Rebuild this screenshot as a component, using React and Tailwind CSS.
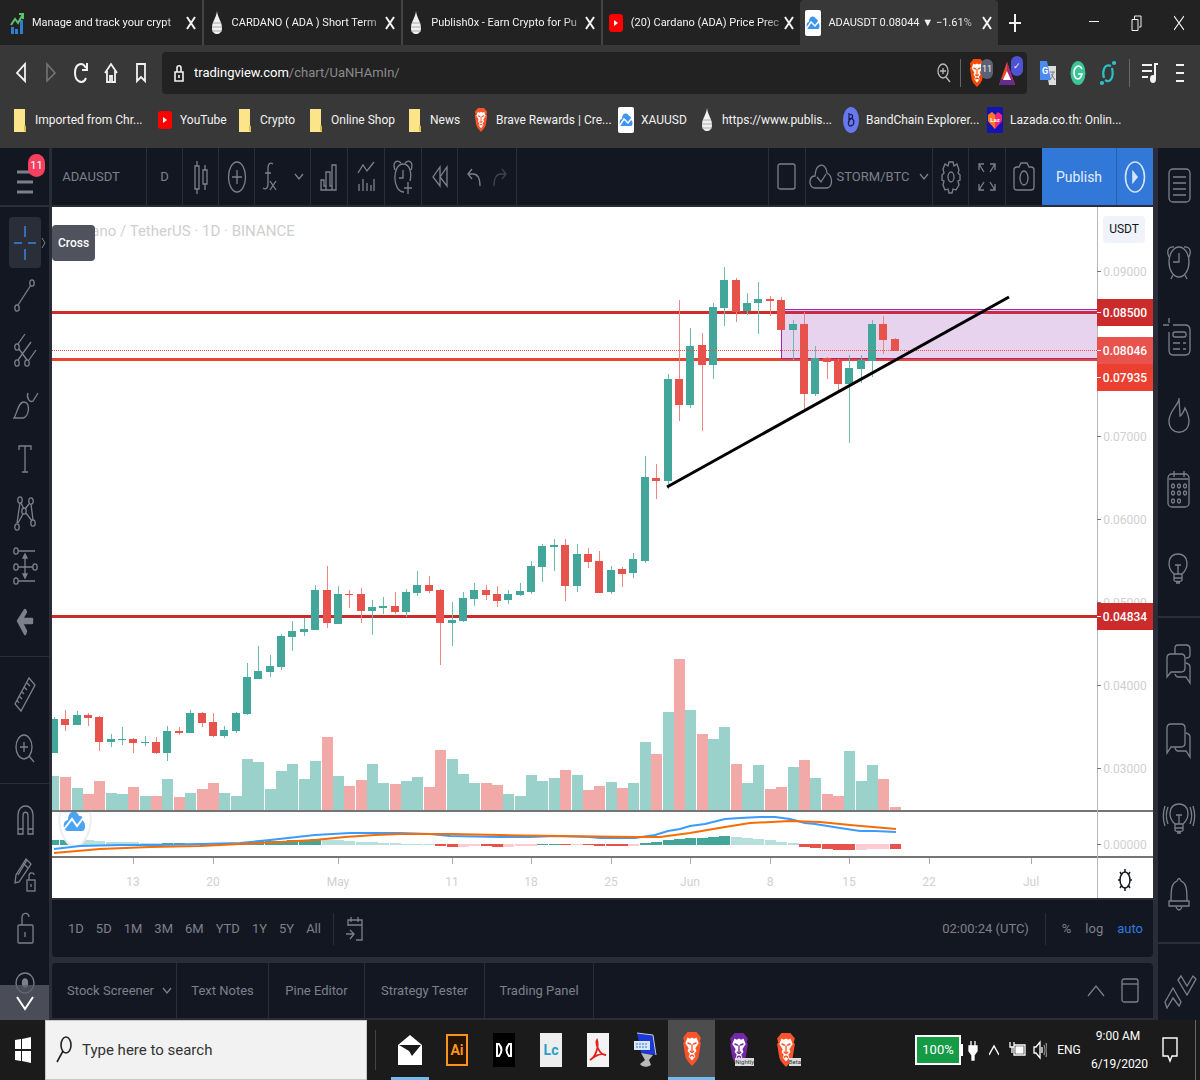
import React from "react";

/* ---------- market data: one row per day, pixel space of the plot ---------- */
/* [up, bodyTop, bodyBottom, wickTop, wickBottom, volumeTop] */
const DAYS = [
  [1, 719, 753, 717, 753, 776], [0, 719, 725, 710, 731, 777], [1, 715, 725, 711, 725, 788],
  [0, 715, 718, 713, 726, 794], [0, 717, 742, 716, 751, 781], [1, 739, 742, 734, 747, 793],
  [1, 739, 740, 727, 745, 794], [0, 739, 743, 738, 753, 787], [1, 742, 743, 736, 746, 796],
  [0, 742, 753, 737, 754, 796], [1, 731, 753, 726, 761, 779], [0, 731, 733, 727, 735, 797],
  [1, 713, 733, 710, 733, 793], [0, 713, 723, 712, 727, 789], [0, 722, 736, 713, 737, 783],
  [1, 730, 736, 726, 738, 793], [1, 713, 731, 712, 733, 796], [1, 677, 714, 663, 715, 759],
  [1, 671, 679, 646, 679, 762], [1, 666, 672, 655, 677, 789], [1, 636, 667, 634, 670, 771],
  [1, 631, 637, 621, 651, 764], [1, 629, 632, 618, 636, 779], [1, 590, 630, 585, 630, 761],
  [0, 590, 623, 566, 628, 737], [1, 594, 624, 586, 624, 776], [0, 594, 595, 590, 608, 786],
  [0, 594, 611, 588, 623, 780], [1, 607, 611, 600, 635, 764], [1, 606, 608, 597, 614, 783],
  [0, 606, 612, 592, 614, 784], [1, 592, 612, 589, 617, 781], [1, 585, 593, 571, 596, 777],
  [0, 585, 591, 576, 593, 787], [0, 590, 623, 589, 665, 750], [1, 620, 623, 602, 646, 759],
  [1, 598, 621, 592, 622, 774], [1, 590, 599, 583, 606, 783], [0, 590, 595, 585, 600, 783],
  [0, 594, 601, 586, 607, 785], [1, 594, 600, 590, 604, 794], [1, 591, 595, 583, 596, 796],
  [1, 566, 592, 561, 594, 775], [1, 546, 567, 544, 582, 781], [1, 545, 547, 539, 571, 778],
  [0, 545, 586, 539, 601, 770], [1, 554, 586, 544, 592, 775], [0, 554, 562, 548, 568, 790],
  [0, 561, 593, 551, 593, 786], [1, 570, 592, 566, 594, 782], [0, 569, 574, 567, 587, 788],
  [1, 559, 573, 553, 578, 783], [1, 477, 561, 456, 563, 742], [0, 478, 481, 464, 499, 754],
  [1, 379, 481, 374, 489, 712], [0, 379, 405, 300, 421, 659], [1, 346, 405, 328, 408, 710],
  [0, 345, 365, 333, 431, 734], [1, 307, 365, 303, 379, 739], [1, 280, 308, 267, 326, 727],
  [0, 280, 312, 278, 322, 764], [1, 303, 311, 293, 315, 783], [1, 299, 303, 282, 334, 765],
  [0, 299, 301, 296, 316, 789], [0, 300, 330, 297, 330, 787], [1, 324, 330, 320, 360, 767],
  [0, 324, 394, 312, 412, 760], [1, 358, 394, 346, 396, 778], [0, 358, 362, 357, 379, 794],
  [0, 361, 384, 359, 391, 796], [1, 368, 384, 355, 443, 751], [1, 360, 369, 355, 383, 781],
  [1, 324, 361, 320, 377, 765], [0, 324, 340, 316, 354, 779], [0, 339, 351, 338, 351, 807],
];
const G = "#42a79a", g = "#b7e0dc", R = "#e8524d", p = "#fdcbd1";
/* [colour, height]; negative heights hang below the zero line */
const HIST = [
  [G, 5], [G, 5], [g, 5], [g, 5], [g, 4], [g, 3], [g, 3], [g, 3], [g, 2], [g, 2], [G, 2], [G, 2], [g, 2],
  [G, 2], [g, 2], [g, 1], [G, 2], [G, 3], [G, 4], [G, 4], [G, 4], [G, 5], [G, 5], [G, 6], [g, 5], [g, 5],
  [g, 4], [g, 3], [g, 3], [g, 2], [g, 2], [g, 1], [g, 1], [g, 1], [R, -2], [R, -3], [p, -3], [p, -2],
  [R, -2], [R, -3], [p, -3], [p, -2], [p, -2], [G, 1], [G, 1], [R, -1], [p, -1], [R, -1], [R, -2],
  [R, -2], [R, -2], [p, -2], [G, 2], [G, 3], [G, 5], [G, 6], [G, 7], [G, 7], [G, 8], [G, 9], [g, 8],
  [g, 7], [g, 6], [g, 5], [g, 3], [g, 2], [R, -3], [R, -4], [R, -5], [R, -6], [R, -6], [p, -6],
  [p, -5], [p, -5], [R, -5],
];
const dayX = (i) => Math.round(53.8 + i * 11.365);

const MACD =
  "54,849 80,846 120,845 160,845 200,844 240,843 270,840 315,835 350,833 400,833 430,834 450,836 500,837 530,837 555,836 590,837 600,838 635,838 655,835 668,831 680,829 690,826 705,824 725,819 740,818 760,817 775,817 790,819 805,823 815,824 840,828 860,831 875,831 896,832";
const SIGNAL =
  "54,853 100,849 150,847 200,846 240,844 280,842 315,840 345,837 375,835 400,834 450,834 500,835 560,836 635,837 660,837 690,833 725,827 750,823 790,821 820,822 850,825 896,829";

const PRICES = [["0.09000", 271], ["0.07000", 436], ["0.06000", 519], ["0.05000", 602], ["0.04000", 685], ["0.03000", 768], ["0.00000", 844]];
const TAGS = [["0.08500", 312, "#cb2b2b"], ["0.08046", 350, "#e8534e"], ["0.07935", 377, "#eb402f"], ["0.04834", 616, "#cb2b2b"]];
const DATES = [["13", 133], ["20", 213], ["May", 338], ["11", 452], ["18", 531], ["25", 611], ["Jun", 690], ["8", 770], ["15", 849], ["22", 929], ["Jul", 1031]];

function Chart() {
  return (
    <svg viewBox="52 207 1101 691" className="block h-auto w-full" role="img" aria-label="ADAUSDT daily chart">
      <rect x="52" y="207" width="1101" height="691" fill="#fff" />
      <g shapeRendering="crispEdges">
        {DAYS.map((d, i) => (
          <rect key={i} x={Math.max(52, dayX(i) - 5)} y={d[5]} width={i ? 11 : 7} height={810 - d[5]} fill={d[0] ? "#9ad2cb" : "#f1aaa7"} />
        ))}
        <rect x="781" y="310" width="316" height="49" fill="#e8d3ee" />
        <path d="M1097 309.5H781.5V359" stroke="#9c27b0" fill="none" />
        <rect x="52" y="311" width="1045" height="3" fill="#cf2c2c" />
        <rect x="781" y="311" width="316" height="3" fill="#c62b48" />
        <rect x="52" y="358" width="1045" height="3" fill="#ec432f" />
        <path d="M781 358.5h316" stroke="#a2268c" />
        <rect x="52" y="615" width="1045" height="3" fill="#cb2b2b" />
        {DAYS.map((d, i) => {
          const x = dayX(i);
          const left = Math.max(52, x - 4);
          return (
            <g key={i}>
              <rect x={x} y={d[3]} width="1" height={d[4] - d[3]} fill={d[0] ? "#6bbbb1" : "#ee8581"} />
              <rect x={left} y={d[1]} width={x + 4 - left} height={d[2] - d[1]} fill={d[0] ? G : R} />
            </g>
          );
        })}
        <path d="M52 350.5h1045" stroke="#e8524d" strokeDasharray="1 1" />
      </g>
      <path d="M667 487 1009 297" stroke="#000" strokeWidth="3" />
      <g shapeRendering="crispEdges">
        {HIST.map(([c, h], i) => {
          const left = Math.max(52, dayX(i) - 5);
          return <rect key={i} x={left} y={h > 0 ? 845 - h : 844} width={i ? 11 : 7} height={Math.abs(h)} fill={c} />;
        })}
      </g>
      <path d="M60 812c-3 14 4 34 15 34s18-20 15-34z" fill="#fff" stroke="#eee" strokeWidth="2" />
      <g transform="translate(64 812)">
        <path d="M3 19C-2 17-1 8 4 8 4-2 13-3 15 4c4 0 4 2 4 5 3 2 3 10-1 10z" fill="#4ba3f5" />
        <path d="m0 17 8-10 5 7 7-9" stroke="#fff" strokeWidth="2" fill="none" />
      </g>
      <polyline points={MACD} fill="none" stroke="#3c9bff" strokeWidth="2" />
      <polyline points={SIGNAL} fill="none" stroke="#f56d05" strokeWidth="2" />
      <g shapeRendering="crispEdges">
        <rect x="52" y="810" width="1101" height="2" fill="#757575" />
        <rect x="52" y="856" width="1101" height="2" fill="#757575" />
        <rect x="1097" y="207" width="1" height="691" fill="#b8b8b8" />
        {PRICES.map(([t, y]) => <rect key={t} x="1097" y={y} width="4" height="1" fill="#777" />)}
        {DATES.map(([t, x]) => <rect key={t} x={x} y="858" width="1" height="6" fill="#aaa" />)}
      </g>
      <g fill="#d0d0d0" className="text-[12px]">
        {PRICES.map(([t, y]) => <text key={t} x="1125" y={y + 5} textAnchor="middle">{t}</text>)}
        {DATES.map(([t, x]) => <text key={t} x={x} y="886" textAnchor="middle">{t}</text>)}
      </g>
      {TAGS.map(([t, y, c]) => (
        <g key={t}>
          <rect x="1097" y={y - 13} width="56" height="27" fill={c} />
          <rect x="1097" y={y} width="4" height="1" fill="#fff" />
          <text x="1125" y={y + 5} textAnchor="middle" fill="#fff" className="text-[12px] font-medium">{t}</text>
        </g>
      ))}
    </svg>
  );
}

/* ---------- line icons ---------- */
const Ico = ({ w = 28, h = 40, c = "", sw = 1.3, children }) => (
  <svg width={w} height={h} viewBox={`0 0 ${w} ${h}`} fill="none" stroke="currentColor" strokeWidth={sw} className={"shrink-0 " + c} aria-hidden="true">
    {children}
  </svg>
);
const E = ({ x, y, rx = 2.2, ry = 3.2, ...r }) => <ellipse cx={x} cy={y} rx={rx} ry={ry} {...r} />;
const Chevron = ({ c }) => <Ico w={10} h={8} c={c}><path d="m1 1 4 5 4-5" /></Ico>;

const LEFT = [
  ["Trend line", <><path d="m7 28 13-20" /><E x={6} y={31} /><E x={21} y={6} /></>],
  ["Pitchfork", <><path d="m7 13 7-10M7 29 20 11M18 29l7-10M8 18l8 11" /><E x={6} y={16} /><E x={6} y={32} /><E x={16} y={32} /></>],
  ["Brush", <><path d="M3 33c3-4 4-16 10-16 7 0 5 15-1 16zM17 8c-2 5 2 10 5 8l5-8" /></>],
  ["Text", <path d="M8 11V7h12v4M14 7v26M11 33h6" />],
  ["Patterns", <><path d="M6 30 9 10M10 10l3 6M7 30l5-9M14 16l4-5M20 11l2 16M15 20l6 8" /><E x={9} y={7} /><E x={20} y={8} /><E x={13} y={18} /><E x={22} y={30} /><E x={6} y={34} /></>],
  ["Prediction", <><path d="M6 4h18M6 20h17M6 34h18M14 9v20" /><path d="m12 11 2-4 2 4zM12 27l2 4 2-4z" fill="currentColor" /><E x={5} y={4} fill="#131722" /><E x={5} y={20} fill="#131722" /><E x={24} y={20} fill="#131722" /><E x={5} y={34} fill="#131722" /></>],
  ["Icons", <path d="m14 9 1 2-4 7h10v4H11l4 8-1 3L7 20z" fill="currentColor" strokeWidth="2.4" strokeLinejoin="round" />],
  null,
  ["Measure", <path d="m18 4 6 7L10 37l-6-7zM16 9l3 3M13 13l3 3M11 18l2 2M8 22l3 3M6 26l2 3" />],
  ["Zoom in", <><ellipse cx="13" cy="19" rx="8" ry="12" /><path d="M13 14v10M9 19h8M18 28l5 6" /></>],
  null,
  ["Magnet", <path d="M7 33V14c0-12 15-12 15 0v19h-5V15c0-5-5-5-5 0v18zM7 28h5M17 28h5" />],
  ["Lock drawing", <><path d="m15 4 5 5L8 27l-4 1 1-8zM12 8l5 5M7 20l9-15" /><rect x="16" y="25" width="8" height="11" /><path d="M18 25v-4c0-4 5-4 5-1M20 29v3" /></>],
  ["Lock", <><rect x="7" y="16" width="15" height="18" rx="1" /><path d="M11 16V9c0-6 7-6 7-1M14 23v5" /></>],
  ["Hide", <><ellipse cx="14" cy="20" rx="9" ry="10" /><ellipse cx="14" cy="20" rx="2.500" ry="4" fill="currentColor" /></>],
];
const bulb = <><path d="M16 26c-8-7-6-20 4-20s12 13 4 20zM16 26v6c0 2 8 2 8 0v-6M16 30h8M18 35h4M20 26v-9M17 17h6" /></>;
const alarm = <><ellipse cx="20" cy="21" rx="10" ry="15" /><path d="M20 12v9h-6M10 16c-3-7 0-11 5-10M30 16c3-7 0-11-5-10M12 38l2-4M28 38l-2-4" /></>;
const RIGHT = [
  ["Watchlist", <><rect x="10" y="4" width="21" height="33" rx="4" /><path d="M14 12h13M14 18h13M14 24h13M14 30h13" /></>],
  ["Alerts", alarm],
  ["Data window", <><path d="M14 8h12q5 0 5 5v20q0 5-5 5H14q-4 0-4-5V15M4 8h6M10 1v5" /><rect x="14" y="15" width="13" height="5" rx="2" /><path d="M14 26h7M24 26h3M14 32h7M24 32h3" /></>],
  ["Hotlists", <path d="M20 5c1 6-10 12-10 23 0 15 20 15 20 0 0-5-2-9-4-13-1 3-2 6-5 8 0-7-1-12-1-18z" />],
  ["Calendar", <><rect x="9" y="5" width="21" height="33" rx="4" /><path d="M15 2v6M25 2v6M10 10h19" />{[14, 20, 26].map((x) => [17, 24, 32].map((y) => x + y < 58 && <E key={x + "-" + y} x={x} y={y} rx={1.5} ry={2} />))}</>],
  ["Ideas", <g transform="translate(-1 3)">{bulb}</g>],
  null,
  ["Public chats", <><path d="M16 11V5q0-3 3-3h8q4 0 4 4v6q0 3-4 3" /><path d="M8 34V15q0-4 4-4h10q4 0 4 4v10q0 4-4 4H12zM27 20q4 1 4 4v16l-4-6h-8q-2 0-3-3" /></>],
  ["Private chats", <path d="M8 34V9q0-4 4-4h10q4 0 4 4v15q0 4-4 4H12zM27 14q4 1 4 4v20l-4-6h-8q-2 0-3-3" />],
  ["Ideas stream", <g transform="translate(0 3)">{bulb}<path d="M9 9c-2 5-2 12 0 17M6 8c-2 6-2 14 0 20M31 9c2 5 2 12 0 17M34 8c2 6 2 14 0 20" /></g>],
  ["Notifications", <path d="M10 30h20v5H10zM12 30c0-14 1-18 6-20q2-5 4 0c5 2 6 6 6 20M17 36q3 6 6 0" />],
  null,
  ["Orders", <path d="m6 33 8-14 8 14-2 4-6-8-6 10zM19 11l3-4 6 10 6-10 3 3-9 16z" />],
];

const B = ({ label, className = "", children, ...r }) => (
  <button type="button" aria-label={label} className={"flex shrink-0 items-center justify-center " + className} {...r}>{children}</button>
);

/* ---------- coloured marks ---------- */
const Lion = ({ w = 18, h = 25, a = "#fb542b" }) => (
  <svg width={w} height={h} viewBox="0 0 18 25" preserveAspectRatio="none" aria-hidden="true">
    <path d="M5 0h8l2 2 2 2-1 3 1 1-2 10q-1 3-6 7-5-4-6-7L1 8l1-1-1-3 2-2z" fill={a} />
    <path d="m5 4 2 1 2-1 2 1 2-1 2 4-3 4 1 2-2 2 1 2-3 3-3-3 1-2-2-2 1-2-3-4z" fill="#fff" />
    <path d="m5 8 3 1M13 8l-3 1M9 9v5M7 14l2 1 2-1M7 18l2-1 2 1" stroke={a} strokeWidth="1.2" fill="none" />
  </svg>
);
const Drop = () => (
  <svg width="12" height="26" viewBox="0 0 12 26" aria-hidden="true">
    <path d="M6 1c1 8 5 10 5 17 0 8-10 8-10 0C1 11 5 9 6 1z" fill="#f1f1f1" />
    <path d="M2 13h8M1 17h10M1 21h10" stroke="#aaa" />
  </svg>
);
const Tv = () => (
  <svg width="16" height="26" viewBox="0 0 16 26" aria-hidden="true">
    <rect width="16" height="26" rx="2" fill="#fff" />
    <path d="M3 19c-2-1-2-7 1-7C4 6 9 5 11 9c2 0 2 2 2 4 2 1 2 6 0 6z" fill="#3c94f3" />
    <path d="m2 18 4-6 4 4 4-5" stroke="#fff" strokeWidth="1.5" fill="none" />
  </svg>
);
const Yt = () => (
  <svg width="14" height="18" viewBox="0 0 14 18" aria-hidden="true"><rect width="14" height="18" rx="3" fill="#f00" /><path d="m5 6 4 3-4 3z" fill="#fff" /></svg>
);
const Folder = () => (
  <svg width="14" height="24" viewBox="0 0 14 24" aria-hidden="true"><path d="M1 1h11v16l1 2v5H1z" fill="#fce48a" /><path d="M11 17v6l2 1v-5z" fill="#e5b93c" /></svg>
);
const Growth = () => (
  <svg width="14" height="22" viewBox="0 0 14 22" aria-hidden="true">
    <path d="M1 22v-7h3v7zM5 22v-5h3v5zM10 22V8h3v14z" fill="#2d7dd2" />
    <path d="m1 13 4-6 3 4 5-9M9 2h4v5" stroke="#5cc46a" strokeWidth="2" fill="none" />
  </svg>
);
const Band = () => (
  <svg width="16" height="26" viewBox="0 0 16 26" aria-hidden="true"><ellipse cx="8" cy="13" rx="8" ry="13" fill="#6879ef" /><path d="M6 6v9M6 12c5-3 7 6 2 7-4 0-3-6 0-7 3-2 1-6-1-4" stroke="#1d1f4f" strokeWidth="1.3" fill="none" /></svg>
);
const Lazada = () => (
  <svg width="16" height="26" viewBox="0 0 16 26" aria-hidden="true">
    <rect width="16" height="26" fill="#1414b4" />
    <path d="m8 22-7-8V8l4-3 3 3 3-3 4 3v6z" fill="#f5277c" /><path d="m8 22-7-8V8l4-3 3 3z" fill="#ff7a1a" />
    <text x="8" y="15" fontSize="6" fontWeight="bold" fill="#fff" textAnchor="middle">Laz</text>
  </svg>
);

const TABS = [
  [<Growth />, "Manage and track your crypt"],
  [<Drop />, "CARDANO ( ADA ) Short Term"],
  [<Drop />, "Publish0x - Earn Crypto for Pu"],
  [<Yt />, "(20) Cardano (ADA) Price Prec"],
  [<Tv />, "ADAUSDT 0.08044 ▼ −1.61%"],
];
const MARKS = [
  [<Folder />, "Imported from Chr..."], [<Yt />, "YouTube"], [<Folder />, "Crypto"], [<Folder />, "Online Shop"], [<Folder />, "News"],
  [<Lion w={14} h={24} />, "Brave Rewards | Cre..."], [<Tv />, "XAUUSD"], [<Drop />, "https://www.publis..."], [<Band />, "BandChain Explorer..."], [<Lazada />, "Lazada.co.th: Onlin..."],
];

function Browser() {
  return (
    <header className="bg-[#383838] text-[#f2f2f2]">
      <div className="flex h-[45px] bg-[#222]">
        <div className="flex min-w-0 flex-1 pl-1" role="tablist">
          {TABS.map(([icon, t], i) => (
            <div key={t} className={"flex min-w-0 flex-1 items-center pr-1.5 pl-1 " + (i === 4 ? "rounded-t bg-[#383838]" : i === 3 ? "" : "border-r-2 border-[#444]")}>
              <button type="button" role="tab" aria-selected={i === 4} className="flex min-w-0 flex-1 items-center gap-1.5">
                <span className="flex w-[18px] shrink-0 justify-center">{icon}</span>
                <span className="flex-1 overflow-hidden text-left text-[11px] leading-6 whitespace-nowrap [mask-image:linear-gradient(to_right,black_88%,#0006)]">{t}</span>
              </button>
              <B label="Close tab" className="ml-1"><Ico w={10} h={14} sw={2}><path d="m1 1 8 12M9 1 1 13" /></Ico></B>
            </div>
          ))}
        </div>
        <B label="New tab" className="w-[34px]"><Ico w={12} h={18} sw={2}><path d="M6 0v18M0 9h12" /></Ico></B>
        <div className="ml-10 flex">
          <B label="Minimize" className="w-[43px]"><Ico w={10} h={14} sw={1}><path d="M0 5.500h10" /></Ico></B>
          <B label="Restore" className="w-[43px]"><Ico w={11} h={16} sw={1}><path d="M1 4.500h6v11H1zM3.500 4V1H10v11H8" /></Ico></B>
          <B label="Close" className="w-[42px]"><Ico w={10} h={16} sw={1.2}><path d="m0 1 10 14M10 1 0 15" /></Ico></B>
        </div>
      </div>
      <div className="flex h-[55px] items-center">
        <div className="flex pl-1.5">
          <B label="Back" className="w-[30px]"><Ico w={12} h={22} sw={1.8}><path d="M10 2v17L2 11z" /></Ico></B>
          <B label="Forward" className="w-[30px] text-[#777]"><Ico w={12} h={22} sw={1.5}><path d="M2 2v17l8-8z" /></Ico></B>
          <B label="Reload" className="w-[30px]"><Ico w={14} h={22} sw={2}><path d="M12 6C8-1 1 2 1 11s8 12 11 5M13 1v7H8" /></Ico></B>
          <B label="Home" className="w-[30px]"><Ico w={14} h={22} sw={1.8}><path d="m1 11 6-9 6 9M3 9v11h3v-6h2v6h3V9" /></Ico></B>
          <B label="Bookmark" className="w-[30px]"><Ico w={12} h={22} sw={1.8}><path d="M2 2h8v17l-4-4-4 4z" /></Ico></B>
        </div>
        <div className="ml-1.5 flex h-[42px] min-w-0 flex-1 items-center rounded bg-[#222] pl-3">
          <Ico w={10} h={18} sw={1.6}><path d="M1 8h8v9H1zM3 8V4c0-3 4-3 4 0v4M5 11v3" /></Ico>
          <a href="#chart" className="ml-2.5 flex-1 truncate text-[13px] text-[#8b8b8b]"><span className="text-white">tradingview.com</span>/chart/UaNHAmIn/</a>
          <B label="Zoom" className="w-7 text-[#bbb]"><Ico w={14} h={24}><ellipse cx="6" cy="10" rx="5" ry="7" /><path d="M6 7v6M3 10h6M9 16l4 5" /></Ico></B>
          <span className="mr-2 ml-0.5 h-7 w-px bg-[#666]" />
          <B label="Brave Shields" className="relative w-6 justify-start"><Lion w={16} h={28} a="#fb4a00" /><span className="absolute top-0 left-3 w-3 rounded-full bg-[#5d6176] text-center text-[9px] leading-5">11</span></B>
          <B label="Rewards" className="relative ml-1.5 w-7 justify-start">
            <svg width="16" height="26" viewBox="0 0 16 26"><path d="M8 2 0 25h16z" fill="#fb4a1c" /><path d="m8 2 8 23H8z" fill="#a3278f" /><path d="M0 25h16l-3-6H2z" fill="#662d91" /><path d="m8 11-4 9h8z" fill="#fff" /></svg>
            <span className="absolute -top-1 left-3 w-3 rounded-full bg-[#4c54d2] text-center text-[9px] leading-5">✓</span>
          </B>
        </div>
        <div className="flex items-center">
          <B label="Translate" className="ml-1.5 w-[30px]"><svg width="16" height="26" viewBox="0 0 16 26"><path d="M6 6h10v19H9z" fill="#ddd" /><path d="M0 1h7l4 19H0z" fill="#4b8bf4" /><text x="5" y="14" fontSize="9" fontWeight="bold" fill="#fff" textAnchor="middle">G</text><path d="M10 12h5M13 12c0 5-2 7-4 8M11 14l4 6" stroke="#778" fill="none" /></svg></B>
          <B label="Grammarly" className="w-[30px]"><svg width="16" height="26" viewBox="0 0 16 26"><ellipse cx="8" cy="13" rx="7.500" ry="12" fill="#3bc495" /><path d="M12 9c-3-6-8-2-8 4s6 9 8 1H8" stroke="#fff" strokeWidth="1.600" fill="none" /></svg></B>
          <B label="ICONex" className="w-[30px] text-[#2cc0c6]"><Ico w={16} h={26} sw={2.2}><path d="M11 6C4 3 2 12 4 18M5 20c6 4 9-4 7-12" /><circle cx="14" cy="3" r="1" /><circle cx="2" cy="23" r="1" /></Ico></B>
          <span className="ml-1.5 h-7 w-px bg-[#666]" />
          <B label="Playlist" className="w-10"><Ico w={16} h={22} sw={2}><path d="M0 3h10M0 9h10M0 15h6M16 2h-3v14" /><ellipse cx="11" cy="17" rx="2" ry="3" fill="currentColor" /></Ico></B>
          <B label="Menu" className="mr-2.5 w-5"><Ico w={10} h={22} sw={2}><path d="M1 3h8M1 11h8M1 19h8" /></Ico></B>
        </div>
      </div>
      <nav className="grid h-12 grid-cols-[145fr_80fr_71fr_99fr_66fr_145fr_81fr_144fr_144fr_144fr_70fr] items-center overflow-hidden pb-2 pl-[11px]">
        {MARKS.map(([icon, t]) => (
          <a key={t} href="#bookmark" className="flex items-center gap-1.5 text-xs whitespace-nowrap"><span className="flex w-[18px] shrink-0 justify-center">{icon}</span>{t}</a>
        ))}
      </nav>
    </header>
  );
}

const sep = "h-full border-r border-[#2a2e39] ";

function TopBar() {
  return (
    <div className="flex h-[57px] items-center bg-[#131722] text-[13px]">
      <button type="button" className={sep + "w-[95px] shrink-0 pr-4"}>ADAUSDT</button>
      <button type="button" className={sep + "w-9 shrink-0"}>D</button>
      <B label="Candles" className={sep + "w-9"}><Ico w={16} h={36}><path d="M2 7h4v23H2zM4 2v5M4 30v5M10 11h4v14h-4zM12 6v5M12 25v6" /></Ico></B>
      <B label="Compare" className={sep + "w-9"}><Ico w={20} h={36}><ellipse cx="10" cy="18" rx="8.500" ry="15" /><path d="M10 11v14M5 18h10" /></Ico></B>
      <B label="Indicators" className={sep + "w-14 gap-4"}><Ico w={16} h={32}><path d="M11 3c-3-2-5 0-5 4v16c0 4-2 6-5 4M3 12h6M8 20l6 9M14 20l-6 9" /></Ico><Chevron /></B>
      <B label="Financials" className={sep + "w-[37px]"}><Ico w={18} h={30}><path d="M1 28V18h3v6h2V10h4v14h2V3h4v25zM12 24v4M6 24v4" /></Ico></B>
      <B label="Templates" className={sep + "w-[37px]"}><Ico w={18} h={32}><path d="m1 12 5-8 4 6 7-9M2 30v-7M6 30V18M10 30v-8M14 30v-6M17 30V18" /></Ico></B>
      <B label="Alert" className={sep + "w-[37px]"}><Ico w={20} h={36}><path d="M11 33C-1 33-1 5 10 5c7 0 9 9 7 17M10 11v8H6M2 11C-1 3 4 0 8 4M18 11c3-8-2-11-6-7M15 23v12M11 29h8" /></Ico></B>
      <B label="Replay" className={sep + "w-9"}><Ico w={16} h={24}><path d="M8 2v19l-7-9zM15 2v19l-7-9z" /></Ico></B>
      <div className={sep + "flex w-[59px] shrink-0 justify-center"}>
        <B label="Undo" className="w-[26px]"><Ico w={14} h={20}><path d="M1 7h5q7 0 7 12M5 2 1 7l4 5" /></Ico></B>
        <B label="Redo" className="w-[26px] opacity-40"><Ico w={14} h={20}><path d="M13 7H8q-7 0-7 12M9 2l4 5-4 5" /></Ico></B>
      </div>
      <div className="h-full flex-1 border-r border-[#2a2e39]" />
      <B label="Layout" className={sep + "w-[37px]"}><Ico w={20} h={28}><rect x="1" y="1" width="17" height="25" rx="2" /></Ico></B>
      <button type="button" className={sep + "flex w-[127px] shrink-0 items-center justify-center gap-1"}>
        <Ico w={24} h={28}><path d="M5 25C-1 23 0 13 6 13 7-1 17-1 18 10c6 3 6 14 0 15zM8 14l4 5 5-8" /></Ico>
        STORM/BTC
        <Chevron c="ml-1.5" />
      </button>
      <B label="Settings" className={sep + "w-9"}><Ico w={20} h={34}><ellipse cx="10" cy="17" rx="3" ry="5" /><path d="m8 2 4 0 1 4 3-2 2 6-1 3 2 2v5l-2 1 1 4-3 5-3-1-1 4H8l-1-4-3 1-2-5 1-4-2-1v-5l2-2-1-4 2-5 3 2z" /></Ico></B>
      <B label="Fullscreen" className={sep + "w-[37px]"}><Ico w={18} h={30}><path d="M1 8V2h5M1 2l5 8M17 8V2h-5M17 2l-5 8M1 22v6h5M1 28l5-8M17 22v6h-5M17 28l-5-8" /></Ico></B>
      <B label="Snapshot" className="h-full w-9"><Ico w={22} h={30}><path d="M1 8q0-3 3-3h2l2-4h6l2 4h2q3 0 3 3v17q0 3-3 3H4q-3 0-3-3z" /><ellipse cx="11" cy="16" rx="4" ry="7" /></Ico></B>
      <button type="button" className="h-full w-[75px] shrink-0 border-r border-[#2960ad] bg-[#3178d8] text-sm text-[#e3eefc]">Publish</button>
      <B label="Play stream" className="h-full w-9 bg-[#3178d8] text-[#d4e4fa]"><Ico w={22} h={34} sw={1.6}><ellipse cx="11" cy="17" rx="9.500" ry="15" /><path d="m9 12 4 5-4 5z" fill="currentColor" /></Ico></B>
    </div>
  );
}

function Trading() {
  return (
    <main className="flex flex-1 bg-[#2a2d38] text-[#7d808b]">
      <aside className="relative flex w-[49px] shrink-0 flex-col bg-[#131722]">
        <B label="Main menu" className="relative h-[57px] pt-2.5">
          <Ico w={18} h={26} sw={3}><path d="M1 3h16M1 13h16M1 23h16" /></Ico>
          <span className="absolute top-1.5 right-1 w-[17px] rounded-full bg-[#f7405f] text-center text-[11px] leading-[23px] text-white">11</span>
        </B>
        <div className="mb-2 h-0.5 bg-[#2a2e39]" />
        <B label="Cross" className="relative h-[55px] text-[#3d83dd]">
          <span className="flex h-[51px] w-8 items-center justify-center rounded bg-[#2a2e39]"><Ico w={24} h={38} sw={1.5}><path d="M12 2v11M12 25v11M1 19h8M15 19h8" /></Ico></span>
          <Ico w={6} h={12} c="absolute right-0.5 text-[#7d808b]" sw={1}><path d="m1 1 3 5-3 5" /></Ico>
        </B>
        {LEFT.map((it, i) =>
          it ? <B key={i} label={it[0]} className="h-[54px]"><Ico>{it[1]}</Ico></B> : <div key={i} className="mt-2 mb-2.5 h-px bg-[#2a2e39]" />
        )}
        <B label="Scroll down" className="absolute bottom-0 h-[35px] w-full bg-[#5d606b]/75 text-white"><Ico w={18} h={18} sw={2}><path d="m1 3 8 12 8-12" /></Ico></B>
      </aside>
      <div className="w-[3px] shrink-0" />
      <section className="flex min-w-0 flex-1 flex-col">
        <TopBar />
        <div className="relative mt-0.5" id="chart">
          <Chart />
          <h1 className="absolute top-3 left-2 text-[15px] leading-6 text-[#cfcfcf]">Cardano / TetherUS · 1D · BINANCE</h1>
          <div className="absolute top-[18px] left-0 rounded-sm bg-[#50535e] px-1.5 text-xs leading-9 font-medium text-white" role="tooltip">Cross</div>
          <button type="button" className="absolute top-[9px] right-2 rounded bg-[#f0f3fa] px-1.5 text-xs leading-[27px] text-[#131722]">USDT</button>
          <B label="Axis settings" className="absolute right-5 bottom-1.5 text-[#131722]"><Ico w={16} h={24} sw={1.5}><ellipse cx="8" cy="12" rx="5" ry="8" /><path d="M8 1v3M8 20v3M1 12h2M13 12h2M3 4l2 3M13 4l-2 3M3 20l2-3M13 20l-2-3" /></Ico></B>
        </div>
        <div className="mt-0.5 flex h-[57px] items-center rounded-b bg-[#131722] pl-4 text-[13px]">
          <div className="flex items-center gap-3">
            {["1D", "5D", "1M", "3M", "6M", "YTD", "1Y", "5Y", "All"].map((t) => <button key={t} type="button">{t}</button>)}
          </div>
          <span className="mx-3 h-8 w-px bg-[#2a2e39]" />
          <B label="Go to date"><Ico w={18} h={26}><path d="M2 10V4h14v20h-6M2 9h14M5 1v5M12 1v5M0 18h7M4 14l4 4-4 5" /></Ico></B>
          <span className="ml-auto">02:00:24 (UTC)</span>
          <span className="mr-4 ml-4 h-8 w-px bg-[#2a2e39]" />
          <div className="flex gap-3.5 pr-2.5"><button type="button">%</button><button type="button">log</button><button type="button" className="text-[#2f7ce0]">auto</button></div>
        </div>
        <div className="mt-1.5 mb-0.5 flex h-[55px] items-center rounded-t bg-[#131722] text-[13px] whitespace-nowrap">
          <button type="button" className={sep + "flex w-[125px] items-center justify-end gap-2 pr-1"}>Stock Screener<Chevron /></button>
          <button type="button" className={sep + "w-[92px]"}>Text Notes</button>
          <button type="button" className={sep + "w-24"}>Pine Editor</button>
          <button type="button" className={sep + "w-[120px]"}>Strategy Tester</button>
          <button type="button" className={sep + "w-[109px]"}>Trading Panel</button>
          <B label="Expand" className="ml-auto"><Ico w={18} h={14}><path d="m1 12 8-10 8 10" /></Ico></B>
          <B label="Maximize" className="mr-3.5 ml-4"><Ico w={18} h={26}><rect x="1" y="1" width="16" height="23" rx="2" /><path d="M1 6h16" /></Ico></B>
        </div>
      </section>
      <div className="w-[5px] shrink-0" />
      <aside className="flex w-[42px] shrink-0 flex-col bg-[#131722]">
        {RIGHT.map((it, i) =>
          it ? (
            <B key={i} label={it[0]} className={i === RIGHT.length - 1 ? "flex-1 pt-2" : "h-[76px]"}><Ico w={40} h={42}>{it[1]}</Ico></B>
          ) : (
            <div key={i} className="mt-3 mb-2 h-0.5 bg-[#2a2e39]" />
          )
        )}
      </aside>
    </main>
  );
}

const Tile = ({ bg, children }) => (
  <svg width="22" height="34" viewBox="0 0 22 34" aria-hidden="true"><rect width="22" height="34" fill={bg} />{children}</svg>
);
const APPS = [
  ["Mail", <svg width="24" height="30" viewBox="0 0 24 30"><path d="M0 10 12 0l12 10v20H0z" fill="#fff" /><path d="M1 10h22l-9 11-3-5z" fill="#1b1b1b" /></svg>],
  ["Illustrator", <svg width="22" height="32" viewBox="0 0 22 32"><rect x="1" y="1" width="20" height="30" fill="#261300" stroke="#f7931e" strokeWidth="2" /><text x="11" y="21" fontSize="14" fontWeight="bold" fill="#f7931e" textAnchor="middle">Ai</text></svg>],
  ["Dolby", <Tile bg="#000"><path d="M4 11h2q5 6 0 12H4zM18 11h-2q-5 6 0 12h2z" fill="#000" stroke="#fff" strokeWidth="2" /></Tile>],
  ["Lightroom Classic", <Tile bg="#eee"><text x="11" y="22" fontSize="14" fontWeight="bold" fill="#2b9fc9" textAnchor="middle">Lc</text></Tile>],
  ["Acrobat", <Tile bg="#f3f3f3"><path d="M3 27c6-3 9-14 7-20-2 3 2 15 9 15-4-2-10 0-16 5z" fill="none" stroke="#e2231a" strokeWidth="1.800" /></Tile>],
  ["Remote keyboard", <svg width="24" height="36" viewBox="0 0 24 36"><path d="m4 1 16 2 3 20-15-2z" fill="#1d38d8" /><path d="m4 1 16 2 3 20" fill="none" stroke="#ccc" /><path d="M1 9h16v9H1z" fill="#d7e8fa" /><path d="M3 12h12M3 15h12" stroke="#3477c9" strokeDasharray="2 1" /><path d="m8 21 12 2-4 5 2 5c-4 3-9 2-11-1l5-4z" fill="#b9b9b9" /></svg>],
  ["Brave", <Lion w={20} h={34} />],
  ["Brave Nightly", <Lion w={20} h={34} a="#7427a6" />, "Nightly"],
  ["Brave Beta", <Lion w={20} h={34} />, "Beta"],
];

function Taskbar() {
  return (
    <footer className="flex h-[60px] items-stretch bg-[#1b1b1b] text-white">
      <B label="Start" className="w-[45px]"><svg width="16" height="28" viewBox="0 0 16 28"><path d="m0 4 6-1v10H0zM7 3l9-2v12H7zM0 15h6v10l-6-1zM7 15h9v12l-9-2z" fill="#fff" /></svg></B>
      <label className="flex w-[322px] items-center gap-2.5 border border-[#c8c8c8] bg-[#f2f2f2] pl-2.5 text-[#222]">
        <Ico w={16} h={28} sw={1.6}><ellipse cx="10" cy="9" rx="5" ry="8" /><path d="M7 15 1 26" /></Ico>
        <input type="text" placeholder="Type here to search" aria-label="Type here to search" className="w-60 bg-transparent text-[15px] placeholder-[#333] outline-none" />
      </label>
      <span className="mr-2.5 ml-2 h-10 w-px self-center bg-[#444]" />
      {APPS.map(([n, ic, tag], i) => (
        <B key={n} label={n} className={"relative w-[47px] " + (i === 6 ? "border-b-3 border-[#76b9ed] bg-[#4d4d4d]" : "")}>
          {ic}
          {i === 0 && <span className="absolute bottom-0 h-[3px] w-[38px] bg-[#76b9ed]" />}
          {tag && <span className="absolute right-2 bottom-3.5 bg-[#ddd] text-[6px] leading-[8px] text-[#333]">{tag}</span>}
        </B>
      ))}
      <div className="ml-auto flex items-center">
        <span className="w-[46px] border-2 border-white bg-[#159a45] text-center text-[13px] leading-[26px]">100%</span>
        <span className="h-3 w-0.5 bg-white" />
        <Ico w={12} h={24} c="ml-1"><path d="M2 8h8v5l-3 4v5H5v-5l-3-4zM4 8V3M8 8V3" fill="currentColor" /></Ico>
        <B label="Hidden icons" className="w-[30px]"><Ico w={10} h={12} sw={1.4}><path d="m0 11 5-9 5 9" /></Ico></B>
        <Ico w={18} h={20}><path d="M5 5h11v10H5zM1 2v5h4V2M3 7v6" /><path d="M7 7h7v6H7z" fill="currentColor" /></Ico>
        <Ico w={14} h={20} c="ml-1.5"><path d="M1 7h2l4-5v16l-4-5H1zM9 7v6" /><path d="M11 5q2 5 0 10M13 3q2 7 0 14" opacity=".5" /></Ico>
        <span className="w-11 text-center text-xs">ENG</span>
        <span className="w-[54px] text-center text-xs leading-7 whitespace-nowrap">9:00 AM<br />6/19/2020</span>
        <B label="Action center" className="mx-4 w-[18px]"><Ico w={16} h={26} sw={1.4}><path d="M1 1h14v18h-5l-2 5-2-5H1z" /></Ico></B>
        <span className="h-full w-[5px] border-l border-[#666]" />
      </div>
    </footer>
  );
}

export default function App() {
  return (
    <div className="flex min-h-screen flex-col [font-family:Roboto,'Liberation_Sans',sans-serif]">
      <Browser />
      <Trading />
      <Taskbar />
    </div>
  );
}
